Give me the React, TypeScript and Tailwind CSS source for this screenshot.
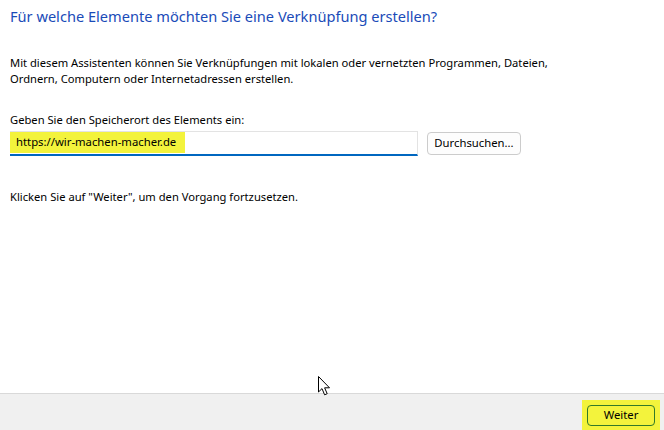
import React from "react";

function Cursor() {
  return (
    <svg
      className="absolute left-[318px] top-[376px]"
      width="14"
      height="21"
      viewBox="0 0 14 21"
    >
      <path
        d="M0.5 0.5 L0.5 16 L4 12.6 L6.6 18.8 L9.2 17.7 L6.6 11.8 L11.5 11.8 Z"
        fill="#ffffff"
        stroke="#000000"
        strokeWidth="1"
        strokeLinejoin="miter"
      />
    </svg>
  );
}

export default function App() {
  return (
    <div
      className="relative w-[664px] h-[430px] flex flex-col bg-white text-black overflow-hidden"
      style={{ fontFamily: '"Segoe UI", "Noto Sans", sans-serif' }}
    >
      <div className="flex-1 flex flex-col px-[10px]">
        <h1 className="mt-[5px] text-[14.6px] leading-[22px] text-[#1a4bb8] font-normal">
          Für welche Elemente möchten Sie eine Verknüpfung erstellen?
        </h1>
        <p className="mt-[28px] text-[11.2px] leading-[16px]">
          Mit diesem Assistenten können Sie Verknüpfungen mit lokalen oder vernetzten Programmen, Dateien,
          <br />
          Ordnern, Computern oder Internetadressen erstellen.
        </p>
        <p className="mt-[25px] text-[11.2px] leading-[16px]">Geben Sie den Speicherort des Elements ein:</p>
        <div className="mt-[3px] flex items-start">
          <div className="w-[408px] h-[25px] flex border-t border-r border-[#e3e3e3] border-b-2 border-b-[#0067c0]">
            <span className="h-[21px] flex items-center pl-[6px] pr-[9px] bg-[#f3f33c] text-[11.3px]">
              https://wir-machen-macher.de
            </span>
          </div>
          <button className="ml-[9px] mt-[1px] w-[94px] h-[23px] rounded-[4px] border border-[#cccccc] bg-[#fdfdfd] text-[11.3px] flex items-center justify-center">
            Durchsuchen...
          </button>
        </div>
        <p className="mt-[33px] text-[11.2px] leading-[16px]">
          Klicken Sie auf "Weiter", um den Vorgang fortzusetzen.
        </p>
      </div>
      <div className="h-[37px] shrink-0 border-t border-[#d9d9d9] bg-[#f0f0f0] flex items-center justify-end pr-[4px]">
        <div className="w-[78px] h-[30px] bg-[#f3f33c] flex items-center justify-center mt-[6px]">
          <button className="w-[68px] h-[21px] rounded-[4px] border border-[#327a28] text-[11.3px] flex items-center justify-center">
            Weiter
          </button>
        </div>
      </div>
      <Cursor />
    </div>
  );
}
